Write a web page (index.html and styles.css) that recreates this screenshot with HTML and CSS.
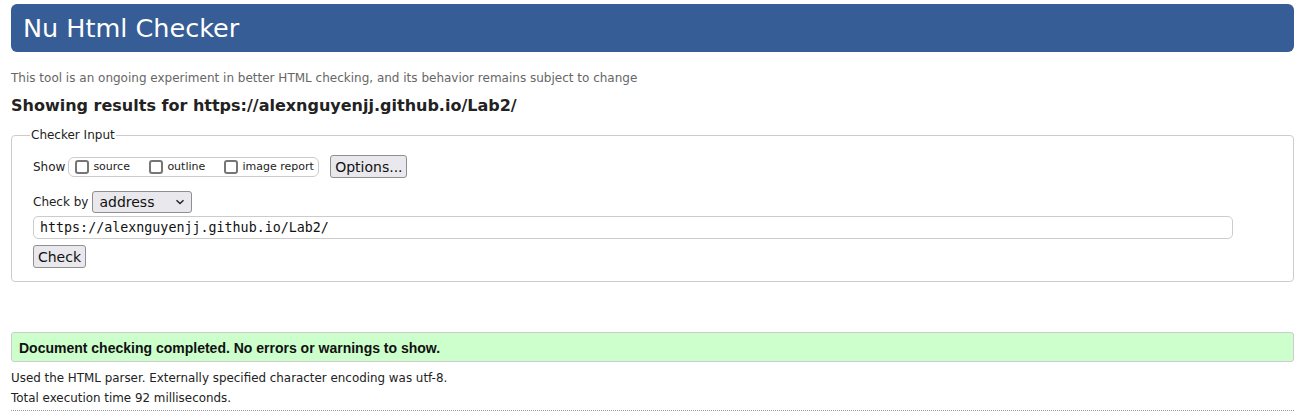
FILE: index.html
```html
<!DOCTYPE html>
<html>
<head>
<meta charset="utf-8">
<title>Nu Html Checker</title>
<link rel="stylesheet" href="styles.css">
</head>
<body>
<h1 class="banner">Nu Html Checker</h1>
<p class="tagline">This tool is an ongoing experiment in better HTML checking, and its behavior remains subject to change</p>
<h2 class="results-for">Showing results for https://alexnguyenjj.github.io/Lab2/</h2>
<form class="checker">
  <fieldset class="input-set">
    <legend class="legend">Checker Input</legend>
    <div class="row show-row">
      <span class="label">Show</span>
      <span class="show-box">
        <label class="opt"><span class="cb"></span>source</label>
        <label class="opt"><span class="cb"></span>outline</label>
        <label class="opt"><span class="cb"></span>image report</label>
      </span>
      <span class="btn options">Options...</span>
    </div>
    <div class="row by-row">
      <span class="label">Check by</span>
      <span class="select">address<svg class="chev" width="10" height="6" viewBox="0 0 10 6"><path d="M1.5 1.2 L5 4.6 L8.5 1.2" fill="none" stroke="#222" stroke-width="1.4"/></svg></span>
    </div>
    <div class="url">https://alexnguyenjj.github.io/Lab2/</div>
    <span class="btn check">Check</span>
  </fieldset>
</form>
<p class="success">Document checking completed. No errors or warnings to show.</p>
<div class="details-block">
  <p class="details">Used the HTML parser. Externally specified character encoding was utf-8.</p>
  <p class="details">Total execution time 92 milliseconds.</p>
</div>
<div class="rule"></div>
</body>
</html>
```
FILE: styles.css
```css
html, body {
  margin: 0;
  padding: 0;
  background: #fff;
}
body {
  padding: 4px 3px 0 11px;
  font-family: "DejaVu Sans", sans-serif;
  color: #222;
}
.banner {
  margin: 0;
  height: 48px;
  box-sizing: border-box;
  background: #365d95;
  color: #fff;
  border-radius: 6px;
  font-weight: normal;
  font-size: 25.5px;
  line-height: 48px;
  padding: 0 12px;
}
.tagline {
  margin: 17px 0 0;
  font-size: 12px;
  line-height: 18px;
  color: #666;
}
.results-for {
  margin: 9px 0 0;
  font-size: 16px;
  line-height: 20px;
  font-weight: bold;
}
.checker {
  margin: 12px 0 0;
}
.input-set {
  margin: 0;
  border: 1px solid #ccc;
  border-radius: 4px;
  padding: 4px 21px 13px;
  min-width: 0;
}
.legend {
  font-size: 12px;
  padding: 0 1px;
  margin-left: -3px;
  color: #222;
}
.row {
  display: flex;
  align-items: center;
}
.label {
  font-size: 12px;
}
.show-row {
  margin-top: 9px;
  height: 23px;
}
.show-box {
  display: flex;
  align-items: center;
  margin-left: 3px;
  width: 251px;
  height: 20px;
  box-sizing: border-box;
  border: 1px solid #ccc;
  border-radius: 6px;
  padding-left: 6px;
}
.opt {
  display: flex;
  align-items: center;
  font-size: 11px;
}
.opt:nth-child(1) { width: 74px; }
.opt:nth-child(2) { width: 75px; }
.cb {
  width: 14px;
  height: 14px;
  box-sizing: border-box;
  border: 2px solid #767676;
  border-radius: 3px;
  margin-right: 4px;
  background: #fff;
}
.btn {
  display: inline-flex;
  align-items: center;
  justify-content: center;
  box-sizing: border-box;
  border: 1px solid #8f8f8f;
  border-radius: 3px;
  background: #e9e9ed;
  color: #111;
  font-size: 14px;
}
.options {
  margin-left: 11px;
  width: 77px;
  height: 23px;
}
.by-row {
  margin-top: 13px;
  height: 22px;
}
.select {
  display: inline-flex;
  align-items: center;
  justify-content: space-between;
  margin-left: 4px;
  width: 100px;
  height: 22px;
  box-sizing: border-box;
  border: 1px solid #8f8f8f;
  border-radius: 3px;
  background: #e9e9ed;
  padding: 0 6px 0 6px;
  font-size: 14px;
  color: #111;
}
.url {
  margin-top: 3px;
  width: 1200px;
  height: 23px;
  box-sizing: border-box;
  border: 1px solid #ccc;
  border-radius: 5px;
  padding-left: 6px;
  font-family: "DejaVu Sans Mono", monospace;
  font-size: 13.33px;
  line-height: 21px;
  color: #111;
}
.check {
  margin-top: 6px;
  width: 53px;
  height: 23px;
}
.success {
  margin: 50px 0 0;
  height: 30px;
  box-sizing: border-box;
  background: #ccffcc;
  border: 1px solid #ccc;
  border-radius: 3px;
  padding: 1px 0 0 7px;
  font-family: "Liberation Sans", Arial, sans-serif;
  font-weight: bold;
  font-size: 14px;
  line-height: 28px;
  color: #111;
}
.details-block {
  margin-top: 6px;
}
.details {
  margin: 0;
  font-size: 11.9px;
  line-height: 20px;
}
.rule {
  margin-top: 2px;
  border-top: 1px dotted #999;
}
```
